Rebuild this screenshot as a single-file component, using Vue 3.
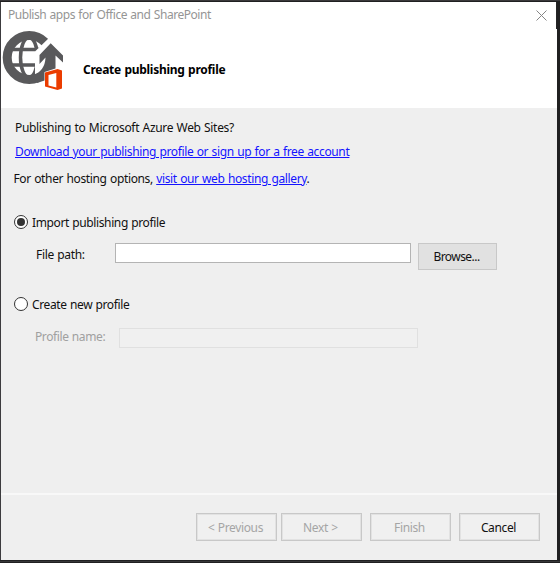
<script setup>
import { ref } from 'vue'
const mode = ref('import')
const footer = [
  { label: '< Previous', cls: 'prev', off: true },
  { label: 'Next >', cls: 'next', off: true },
  { label: 'Finish', cls: 'finish', off: true },
  { label: 'Cancel', cls: 'cancel', off: false },
]
</script>

<template>
  <div class="frame">
    <div class="dialog">
      <header class="head">
        <div class="titlebar">
          <span class="title">Publish apps for Office and SharePoint</span>
          <svg class="close" width="11" height="11" viewBox="0 0 11 11"><path d="M.5 .5 10.500 10.500M10.500 .5 .5 10.500" stroke="#858585" fill="none" /></svg>
          <i class="edge"></i>
        </div>
        <div class="banner">
          <svg class="logo" width="64" height="64" viewBox="0 0 64 64">
            <circle cx="28.200" cy="28.500" r="22" fill="#fff" stroke="#59595b" stroke-width="9" />
            <g fill="none" stroke="#59595b" stroke-width="3.500">
              <ellipse cx="28" cy="28.500" rx="8.500" ry="20" />
              <path d="M8 20.500H48M8 36H48" />
            </g>
            <path d="M51 6 34 22.500V45L42 56H64V20Z" fill="#fff" />
            <path d="M49.700 14.300 62 26.500V33.500L54.500 26.500V39.500L43.500 43V51.500L36 54 32 46Q44 42 44.500 28.500L38.500 35V26Z" fill="#59595b" />
            <path d="M44 43.500 56.500 40 61 41.500V59.500L56.500 61 44 57.500Z" fill="#eb3c00" />
            <path d="M47.500 46 55.300 44V58.500L47.500 56.500Z" fill="#fff" />
          </svg>
          <h1 class="heading">Create publishing profile</h1>
        </div>
      </header>
      <main class="body">
        <p class="line q">Publishing to Microsoft Azure Web Sites?</p>
        <p class="line dl"><a>Download your publishing profile or sign up for a free account</a></p>
        <p class="line other">For other hosting options, <a>visit our web hosting gallery</a>.</p>
        <label class="option" @click="mode = 'import'">
          <i class="radio" :class="{ on: mode === 'import' }"></i><span>Import publishing profile</span>
        </label>
        <div class="field file">
          <span class="lbl">File path:</span>
          <div class="box"></div>
          <button class="browse">Browse...</button>
        </div>
        <label class="option second" @click="mode = 'new'">
          <i class="radio" :class="{ on: mode === 'new' }"></i><span>Create new profile</span>
        </label>
        <div class="field name">
          <span class="lbl">Profile name:</span>
          <div class="box"></div>
        </div>
      </main>
      <footer class="foot">
        <button v-for="b in footer" :key="b.label" class="btn" :class="[b.cls, { off: b.off }]">{{ b.label }}</button>
      </footer>
    </div>
  </div>
</template>

<style>
body { margin: 0; overflow: hidden; }
</style>
<style scoped>
* { box-sizing: border-box; }
.frame {
  width: 560px; height: 563px; padding: 2px 3px 3px 1px;
  background: linear-gradient(#3a393b 1px, #202021 1px 2px, transparent 2px 560px, #202022 560px 561px, #363638 561px 562px, #202022 562px),
    linear-gradient(90deg, #3c3b3e 1px, #202021 1px);
  font: 12px/16px "Noto Sans", sans-serif; color: #111; white-space: pre;
  letter-spacing: -.34px; word-spacing: .6px;
}
.dialog { height: 558px; display: flex; flex-direction: column; background: #efefef; }
.head { height: 106px; background: #fff; flex: none; }
.titlebar { height: 27px; display: flex; justify-content: space-between; padding-left: 7px; }
.title { color: #959595; letter-spacing: -.45px; padding-top: 5px; flex: 1; }
.close { margin: 8px 9px 0 0; }
.edge { width: 1px; height: 27px; background: #252526; }
.banner { display: flex; }
.heading { margin: 33px 0 0 18px; font-size: 12px; line-height: 16px; font-weight: 700; color: #000; letter-spacing: -.27px; }
.body { height: 385px; padding: 12px 0 0 14px; }
.line { margin: 0; height: 16px; }
.q { letter-spacing: -.32px; }
.dl { margin-top: 8px; letter-spacing: -.36px; }
.other { margin: 11px 0 0 -1.5px; letter-spacing: -.36px; }
a { color: #1414ff; text-decoration: underline; }
.option { display: flex; align-items: center; height: 16px; gap: 4px; margin: 27px 0 0 -1px; letter-spacing: -.38px; }
.option span { padding-top: 1px; }
.radio { width: 14px; height: 14px; border: 1px solid #333; border-radius: 50%; background: #fff; padding: 2px; }
.radio.on::before { content: ""; display: block; width: 8px; height: 8px; border-radius: 50%; background: #333; }
.field { display: flex; align-items: flex-start; }
.file { margin-top: 13px; padding-left: 21px; }
.file .lbl { width: 79px; padding-top: 4px; }
.box { width: 296px; height: 20px; border: 1px solid #b4b4b4; background: #fff; }
.browse { margin-left: 7px; width: 79px; height: 27px; border: 1px solid #c8c8c8; background: #e1e1e1; }
button { font: inherit; color: #111; padding: 0; white-space: pre; letter-spacing: -.36px; word-spacing: .6px; }
.field .browse { letter-spacing: -.55px; padding: 1px 2px 0 0; }
.second { margin-top: 26px; }
.name { margin-top: 16px; padding-left: 20px; color: #a0a0a0; letter-spacing: -.4px; }
.name .lbl { width: 84px; padding-top: 1px; }
.name .box { width: 299px; background: #f0f0f0; border-color: #e0e0e0; }
.foot { flex: 1; border-top: 2px solid #f8f8f8; padding: 18px 0 0 195px; display: flex; align-items: flex-start; }
.btn { width: 81px; height: 28px; border: 1px solid #c8c8c8; background: #f0f0f0; box-shadow: inset 0 0 0 1px #e2e2e2; padding: 1px 2px 0 0; }
.btn.off { color: #a5a5a5; }
.next { margin-left: 4px; }
.finish, .cancel { margin-left: 8px; }
</style>
